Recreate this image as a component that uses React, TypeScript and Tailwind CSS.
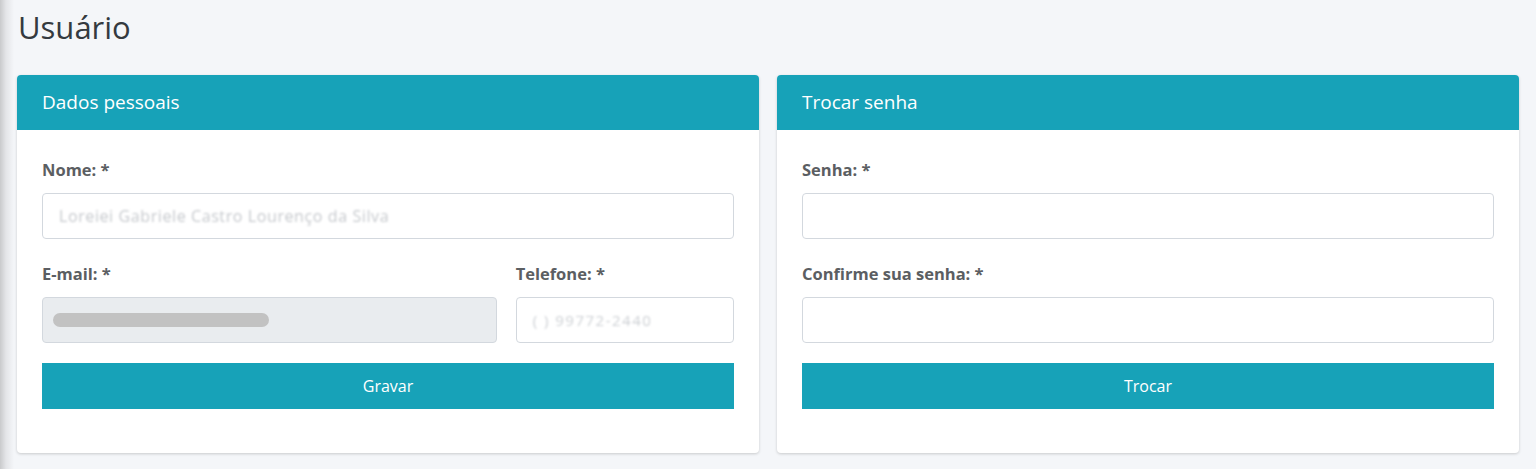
import { useState } from "react";

function Label({ children }: { children: string }) {
  return (
    <label className="block text-[16.5px] leading-[24px] font-bold text-[#5b5e62] mb-[11px]">
      {children}
    </label>
  );
}

function Card({ title, children }: { title: string; children: React.ReactNode }) {
  return (
    <div className="flex-1 bg-white rounded-[4px] shadow-[0_1px_3px_rgba(0,0,0,0.18)] overflow-hidden">
      <div className="h-[55px] bg-[#17a2b8] flex items-center px-[25px] text-white text-[19px]">
        {title}
      </div>
      <div className="px-[25px] pt-[28px] pb-[44px]">{children}</div>
    </div>
  );
}

const inputCls =
  "w-full h-[46px] border border-[#d3d8de] rounded-[4px] px-[16px] text-[16px] outline-none bg-white";

export default function App() {
  const [senha, setSenha] = useState("");
  const [confirma, setConfirma] = useState("");

  return (
    <div
      className="min-h-[469px] bg-[#f4f6f9] bg-[linear-gradient(to_right,#c9cacc_0px,#e4e5e8_6px,#f4f6f9_14px)] px-[17px] pt-[6px] pb-[16px]"
      style={{ fontFamily: "'Open Sans', 'Noto Sans', sans-serif" }}
    >
      <h1 className="text-[31px] leading-[42px] text-[#343a40] pl-[1px] mb-[27px]">Usuário</h1>

      <div className="flex gap-[18px]">
        <Card title="Dados pessoais">
          <Label>Nome: *</Label>
          <div className={`${inputCls} flex items-center`}>
            <span className="text-[#c6c9cd] text-[16px] tracking-[0.6px] blur-[0.9px] select-none">
              Loreiei Gabriele Castro Lourenço da Silva
            </span>
          </div>

          <div className="grid grid-cols-[456fr_219fr] gap-[19px] mt-[23px]">
            <div>
              <Label>E-mail: *</Label>
              <div className="w-full h-[46px] border border-[#d3d8de] rounded-[4px] bg-[#e9ecef] flex items-center px-[10px]">
                <div className="h-[14px] w-[216px] rounded-full bg-[#c2c2c2] blur-[0.5px]" />
              </div>
            </div>
            <div>
              <Label>Telefone: *</Label>
              <div className={`${inputCls} flex items-center`}>
                <span className="text-[#cdd0d4] text-[15px] tracking-[1.5px] blur-[1px] select-none">
                  (  ) 99772-2440
                </span>
              </div>
            </div>
          </div>

          <button className="w-full h-[46px] mt-[20px] bg-[#17a2b8] text-white text-[16px]">
            Gravar
          </button>
        </Card>

        <Card title="Trocar senha">
          <Label>Senha: *</Label>
          <input
            type="password"
            value={senha}
            onChange={(e) => setSenha(e.target.value)}
            className={inputCls}
          />
          <div className="mt-[23px]">
            <Label>Confirme sua senha: *</Label>
            <input
              type="password"
              value={confirma}
              onChange={(e) => setConfirma(e.target.value)}
              className={inputCls}
            />
          </div>
          <button className="w-full h-[46px] mt-[20px] bg-[#17a2b8] text-white text-[16px]">
            Trocar
          </button>
        </Card>
      </div>
    </div>
  );
}
